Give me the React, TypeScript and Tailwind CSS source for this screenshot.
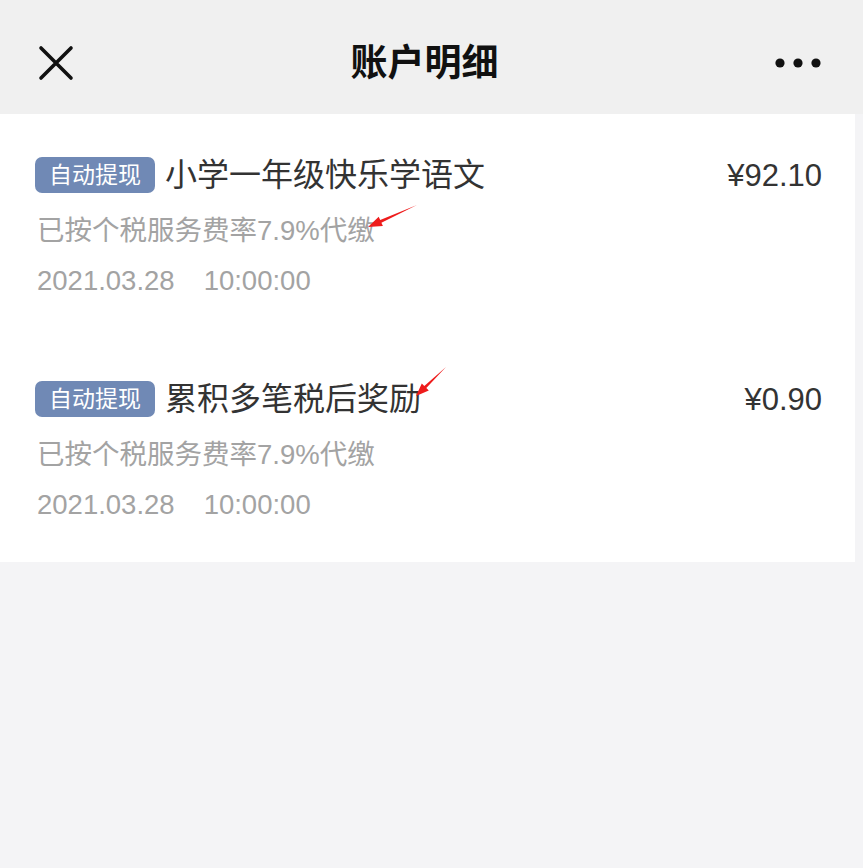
const font = { fontFamily: '"Liberation Sans", "Noto Sans CJK SC", sans-serif' };

type Entry = { title: string; amount: string; note: string; date: string; time: string };

const entries: Entry[] = [
  { title: "小学一年级快乐学语文", amount: "¥92.10", note: "已按个税服务费率7.9%代缴", date: "2021.03.28", time: "10:00:00" },
  { title: "累积多笔税后奖励", amount: "¥0.90", note: "已按个税服务费率7.9%代缴", date: "2021.03.28", time: "10:00:00" },
];

const EntryRow = ({ entry }: { entry: Entry }) => (
  <div className="flex flex-col pl-[35px] pr-[33px]">
    <div className="flex h-[40px] items-center">
      <span className="flex h-[36px] items-center rounded-[7px] bg-[#7089b5] px-[14px] text-[23px] leading-none text-white">
        自动提现
      </span>
      <span className="ml-[10px] text-[32px] leading-none text-[#333333]">{entry.title}</span>
      <span className="ml-auto text-[31px] leading-none text-[#333333]">{entry.amount}</span>
    </div>
    <div className="mt-[16px] flex h-[40px] items-center pl-[2px] text-[27.5px] leading-none text-[#a3a3a3]">
      {entry.note}
    </div>
    <div className="mt-[10px] flex h-[40px] items-center pl-[2px] text-[27.5px] leading-none text-[#a3a3a3]">
      <span>{entry.date}</span>
      <span className="ml-[29px]">{entry.time}</span>
    </div>
  </div>
);

export default function App() {
  return (
    <div className="relative h-[868px] w-[863px] overflow-hidden bg-[#f4f4f6]" style={font}>
      <header className="flex h-[114px] items-center bg-[#f0f0f0] px-[38px] pt-[12px]">
        <svg width="36" height="36" viewBox="0 0 36 36" className="shrink-0">
          <path d="M3 3 L33 33 M33 3 L3 33" stroke="#111" strokeWidth="3.6" strokeLinecap="round" />
        </svg>
        <h1 className="flex-1 text-center text-[37px] font-semibold leading-none text-[#111]">账户明细</h1>
        <svg width="46" height="12" viewBox="0 0 46 12" className="mr-[4px] shrink-0">
          <circle cx="5" cy="6" r="4.6" fill="#111" />
          <circle cx="23" cy="6" r="4.6" fill="#111" />
          <circle cx="41" cy="6" r="4.6" fill="#111" />
        </svg>
      </header>

      <main className="flex w-[855px] flex-col gap-[78px] bg-white pb-[37px] pt-[41px]">
        {entries.map((e) => (
          <EntryRow key={e.title} entry={e} />
        ))}
      </main>

      {/* red annotation arrows */}
      <svg className="pointer-events-none absolute left-0 top-0" width="863" height="868">
        <polygon points="417,205 380.2,219.9 378.7,216.7 368,227 382.9,225.9 381.4,222.7" fill="#ee1c1c" />
        <polygon points="446,367 424.3,385.9 421.8,383.4 416,396 428.8,390.6 426.3,388.1" fill="#ee1c1c" />
      </svg>
    </div>
  );
}
